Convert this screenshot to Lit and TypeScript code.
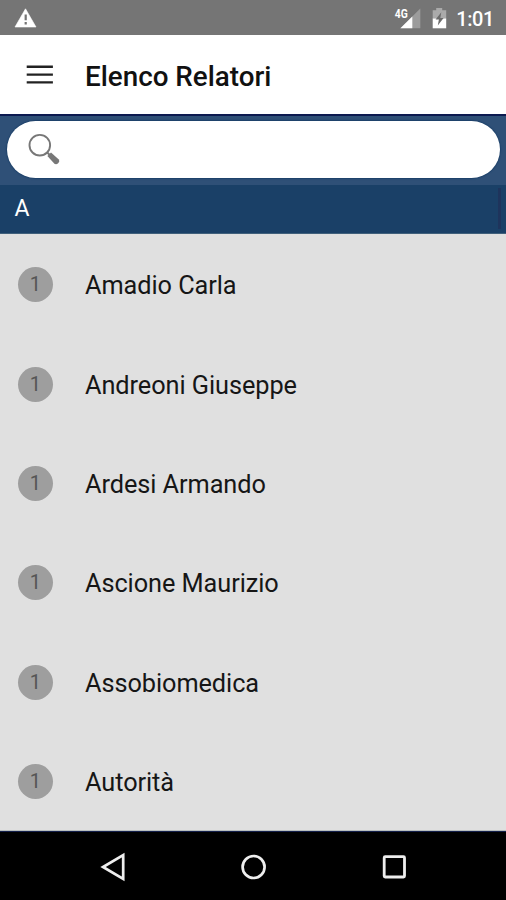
import { LitElement, html, css } from "lit";
import { customElement, property } from "lit/decorators.js";

@customElement("status-bar")
class StatusBar extends LitElement {
  static styles = css`
    :host { display: flex; height: 35px; background: #757575; color: #fff; align-items: center; box-sizing: border-box; padding: 0 12px 0 14px; }
    svg { display: block; flex: none; }
    .spacer { flex: 1; }
    .signal { margin-right: 11px; }
    .battery { margin-right: 9px; }
    .time { font: 500 20px/32px Roboto, sans-serif; padding-top: 3px; height: 32px; letter-spacing: -0.4px; }
  `;
  render() {
    return html`
      <svg width="24" height="35" viewBox="0 0 24 35">
        <path d="M11.5 8.8 22 27H1Z" fill="#fff" stroke="#fff" stroke-width=".6" stroke-linejoin="round" />
        <path d="M11.7 14.5v5.8M11.7 22v2.4" stroke="#757575" stroke-width="2.2" />
      </svg>
      <div class="spacer"></div>
      <svg class="signal" width="27" height="35" viewBox="0 0 27 35">
        <path d="M26.3 8.5V28.3H6.4Z" fill="#9c9c9c" />
        <path d="M18.3 16.5V28.3H6.4Z" fill="#fff" />
        <path d="M0 6h14.6v12.6H0Z" fill="#757575" />
        <text x="0.8" y="18" fill="#fff" font-family="Roboto, sans-serif" font-weight="700" font-size="12.5" textLength="13" lengthAdjust="spacingAndGlyphs">4G</text>
      </svg>
      <svg class="battery" width="15" height="35" viewBox="0 0 15 35">
        <path d="M.7 10.2h3.5V8h6v2.2h4v8.5H.7Z" fill="#aaa" />
        <path d="M.7 18.5h13.5v9.8H.7Z" fill="#fff" />
        <path d="M9.3 12.3 3.6 19.5h3.3L5.8 25.5l5.8-7.5H8.3Z" fill="#6b6b6b" />
      </svg>
      <div class="time">1:01</div>
    `;
  }
}

@customElement("title-bar")
class TitleBar extends LitElement {
  static styles = css`
    :host { display: flex; height: 79px; background: #fff; align-items: center; padding-left: 26px; }
    svg { display: block; margin-right: 32px; }
    .title { font: 500 27.8px/40px Roboto, sans-serif; color: #111; padding-top: 5px; white-space: nowrap; }
  `;
  @property() heading = "";
  render() {
    return html`
      <svg width="27" height="20" viewBox="0 0 27 20">
        <path d="M.7 1.8h26.2M.7 9.6h26.2M.7 17.4h26.2" stroke="#222" stroke-width="2.4" />
      </svg>
      <div class="title">${this.heading}</div>
    `;
  }
}

@customElement("search-strip")
class SearchStrip extends LitElement {
  static styles = css`
    :host { display: block; height: 71px; box-sizing: border-box; padding: 5px 6px 0 7px; background: #2f5077; border-top: 2px solid #0c1a50; }
    .field { height: 57px; box-sizing: border-box; border-radius: 29px; background: #fff; box-shadow: 0 0 1.5px 0.5px #0f3560; padding: 12px 0 0 20px; }
    svg { display: block; }
  `;
  render() {
    return html`
      <div class="field">
        <svg width="34" height="34" viewBox="0 0 34 34">
          <circle cx="12.8" cy="12.2" r="10.3" fill="none" stroke="#777" stroke-width="1.9" />
          <path d="m20 19.3 3 3" stroke="#777" stroke-width="2" />
          <path d="M20.4 23 24 19.5 31.8 26.4Q33 28 31.4 30 29.4 32 27.4 30.8Z" fill="#777" />
        </svg>
      </div>
    `;
  }
}

@customElement("speaker-row")
class SpeakerRow extends LitElement {
  static styles = css`
    :host { display: flex; height: 99.35px; align-items: center; padding-left: 18.4px; font-family: Roboto, sans-serif; }
    .badge { width: 35px; height: 35px; flex: none; border-radius: 50%; background: #9e9e9e; color: #555; font-size: 20px; line-height: 35px; text-align: center; margin-right: 31.6px; text-indent: -1px; }
    .name { font-size: 25.3px; line-height: 34px; color: #161616; padding-top: 3px; letter-spacing: -0.06px; white-space: nowrap; }
  `;
  @property() name = "";
  @property({ type: Number }) count = 1;
  render() {
    return html`<div class="badge">${this.count}</div><div class="name">${this.name}</div>`;
  }
}

@customElement("nav-bar")
class NavBar extends LitElement {
  static styles = css`
    :host { display: flex; height: 69px; box-sizing: border-box; border-top: 1.5px solid #14204a; background: #000; justify-content: center; align-items: center; gap: 112.5px; padding-top: 2px; }
    svg { display: block; }
  `;
  render() {
    return html`
      <svg width="28" height="30" viewBox="0 0 28 30" fill="none" stroke="#eee" stroke-width="2.7"><path d="M24.2 3.2v23.6L4 15Z" /></svg>
      <svg width="28" height="30" viewBox="0 0 28 30" fill="none" stroke="#eee" stroke-width="2.7"><circle cx="14.6" cy="15" r="11" /></svg>
      <svg width="28" height="30" viewBox="0 0 28 30" fill="none" stroke="#eee" stroke-width="2.8"><rect x="4.2" y="4.7" width="20.3" height="20.3" rx="1" /></svg>
    `;
  }
}

@customElement("app-root")
class AppRoot extends LitElement {
  static styles = css`
    :host { display: flex; flex-direction: column; width: 506px; height: 900px; overflow: hidden; background: #e0e0e0; }
    .letter { height: 49px; box-sizing: border-box; flex: none; background: #1a4067; border-bottom: 1.5px solid #40607b; color: #fff; font: 400 23px/48px Roboto, sans-serif; padding-left: 14.5px; display: flex; justify-content: space-between; }
    .thumb { width: 3px; margin: 3px 5px 4px 0; background: #1e345c; }
    .list { flex: 1; min-height: 0; overflow: hidden; padding-top: 1px; box-sizing: border-box; border-bottom: 1px solid #b9bebe; }
    status-bar, title-bar, search-strip, nav-bar { flex: none; }
  `;
  private speakers = ["Amadio Carla", "Andreoni Giuseppe", "Ardesi Armando", "Ascione Maurizio", "Assobiomedica", "Autorità"];
  render() {
    return html`
      <status-bar></status-bar>
      <title-bar heading="Elenco Relatori"></title-bar>
      <search-strip></search-strip>
      <div class="letter"><span>A</span><div class="thumb"></div></div>
      <div class="list">${this.speakers.map((s) => html`<speaker-row name=${s} count="1"></speaker-row>`)}</div>
      <nav-bar></nav-bar>
    `;
  }
}
